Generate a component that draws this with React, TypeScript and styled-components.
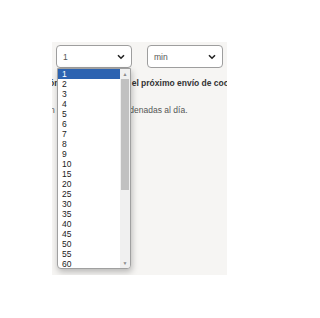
import React from "react"
import styled, { createGlobalStyle } from "styled-components"

const options = [1, 2, 3, 4, 5, 6, 7, 8, 9, 10, 15, 20, 25, 30, 35, 40, 45, 50, 55, 60]

export default function App() {
  return (
    <>
      <Global />
      <Panel>
        <SelectRow>
          <FieldWrap>
            <Select>
              <span>1</span>
              <Chevron />
            </Select>
            <List>
              <Items>
                {options.map((n) => (
                  <Item key={n} $active={n === 1}>
                    {n}
                  </Item>
                ))}
              </Items>
              <Scrollbar>
                <Arrow>▲</Arrow>
                <Track>
                  <Thumb />
                </Track>
                <Arrow>▼</Arrow>
              </Scrollbar>
            </List>
          </FieldWrap>
          <Select>
            <span>min</span>
            <Chevron />
          </Select>
        </SelectRow>
        <Strong>ón: intervalos hasta el próximo envío de coordenadas</Strong>
        <Note>n máximo de 48 coordenadas al día.</Note>
      </Panel>
    </>
  )
}

function Chevron() {
  return (
    <svg width="8" height="6" viewBox="0 0 8 6">
      <path d="M1 1.2 L4 4.2 L7 1.2" fill="none" stroke="#222" strokeWidth="1.6" />
    </svg>
  )
}

const Global = createGlobalStyle`
  body {
    margin: 0;
    background: #ffffff;
    font-family: "Liberation Sans", Arial, sans-serif;
  }
`
const Panel = styled.div`
  margin: 42px 0 0 52px;
  width: 175px;
  height: 233px;
  background: #f6f5f3;
  overflow: hidden;
  padding-top: 3px;
  box-sizing: border-box;
`
const SelectRow = styled.div`
  display: flex;
  gap: 15px;
  padding-left: 4px;
`
const FieldWrap = styled.div`
  position: relative;
`
const Select = styled.div`
  box-sizing: border-box;
  width: 76px;
  height: 23px;
  border: 1px solid #9e9e9e;
  border-radius: 4px;
  background: #fff;
  display: flex;
  align-items: center;
  justify-content: space-between;
  padding: 0 6px 0 6px;
  font-size: 8.5px;
  color: #555;
`
const List = styled.div`
  position: absolute;
  top: 23px;
  left: 1px;
  width: 74px;
  height: 201px;
  box-sizing: border-box;
  border: 1px solid #a0a0a0;
  border-radius: 0 0 4px 4px;
  background: #fff;
  display: flex;
  overflow: hidden;
  box-shadow: 1px 3px 6px rgba(0, 0, 0, 0.25);
  z-index: 2;
`
const Items = styled.div`
  flex: 1;
  display: flex;
  flex-direction: column;
`
const Item = styled.div<{ $active: boolean }>`
  height: 10px;
  line-height: 10px;
  font-size: 8.5px;
  padding-left: 4px;
  color: ${(p) => (p.$active ? "#fff" : "#222")};
  background: ${(p) => (p.$active ? "#2c63b1" : "transparent")};
`
const Scrollbar = styled.div`
  width: 10px;
  display: flex;
  flex-direction: column;
  background: #f0f0f0;
`
const Arrow = styled.div`
  height: 10px;
  font-size: 5px;
  line-height: 10px;
  text-align: center;
  color: #8a8a8a;
`
const Track = styled.div`
  flex: 1;
  display: flex;
  flex-direction: column;
`
const Thumb = styled.div`
  height: 111px;
  margin: 0 1px;
  background: #c1c1c1;
`
const Strong = styled.div`
  margin: 10px 0 0 -3px;
  font-size: 8.5px;
  font-weight: bold;
  color: #333;
  white-space: nowrap;
`
const Note = styled.div`
  margin: 17px 0 0 -2px;
  font-size: 8.5px;
  color: #555;
  white-space: nowrap;
`
